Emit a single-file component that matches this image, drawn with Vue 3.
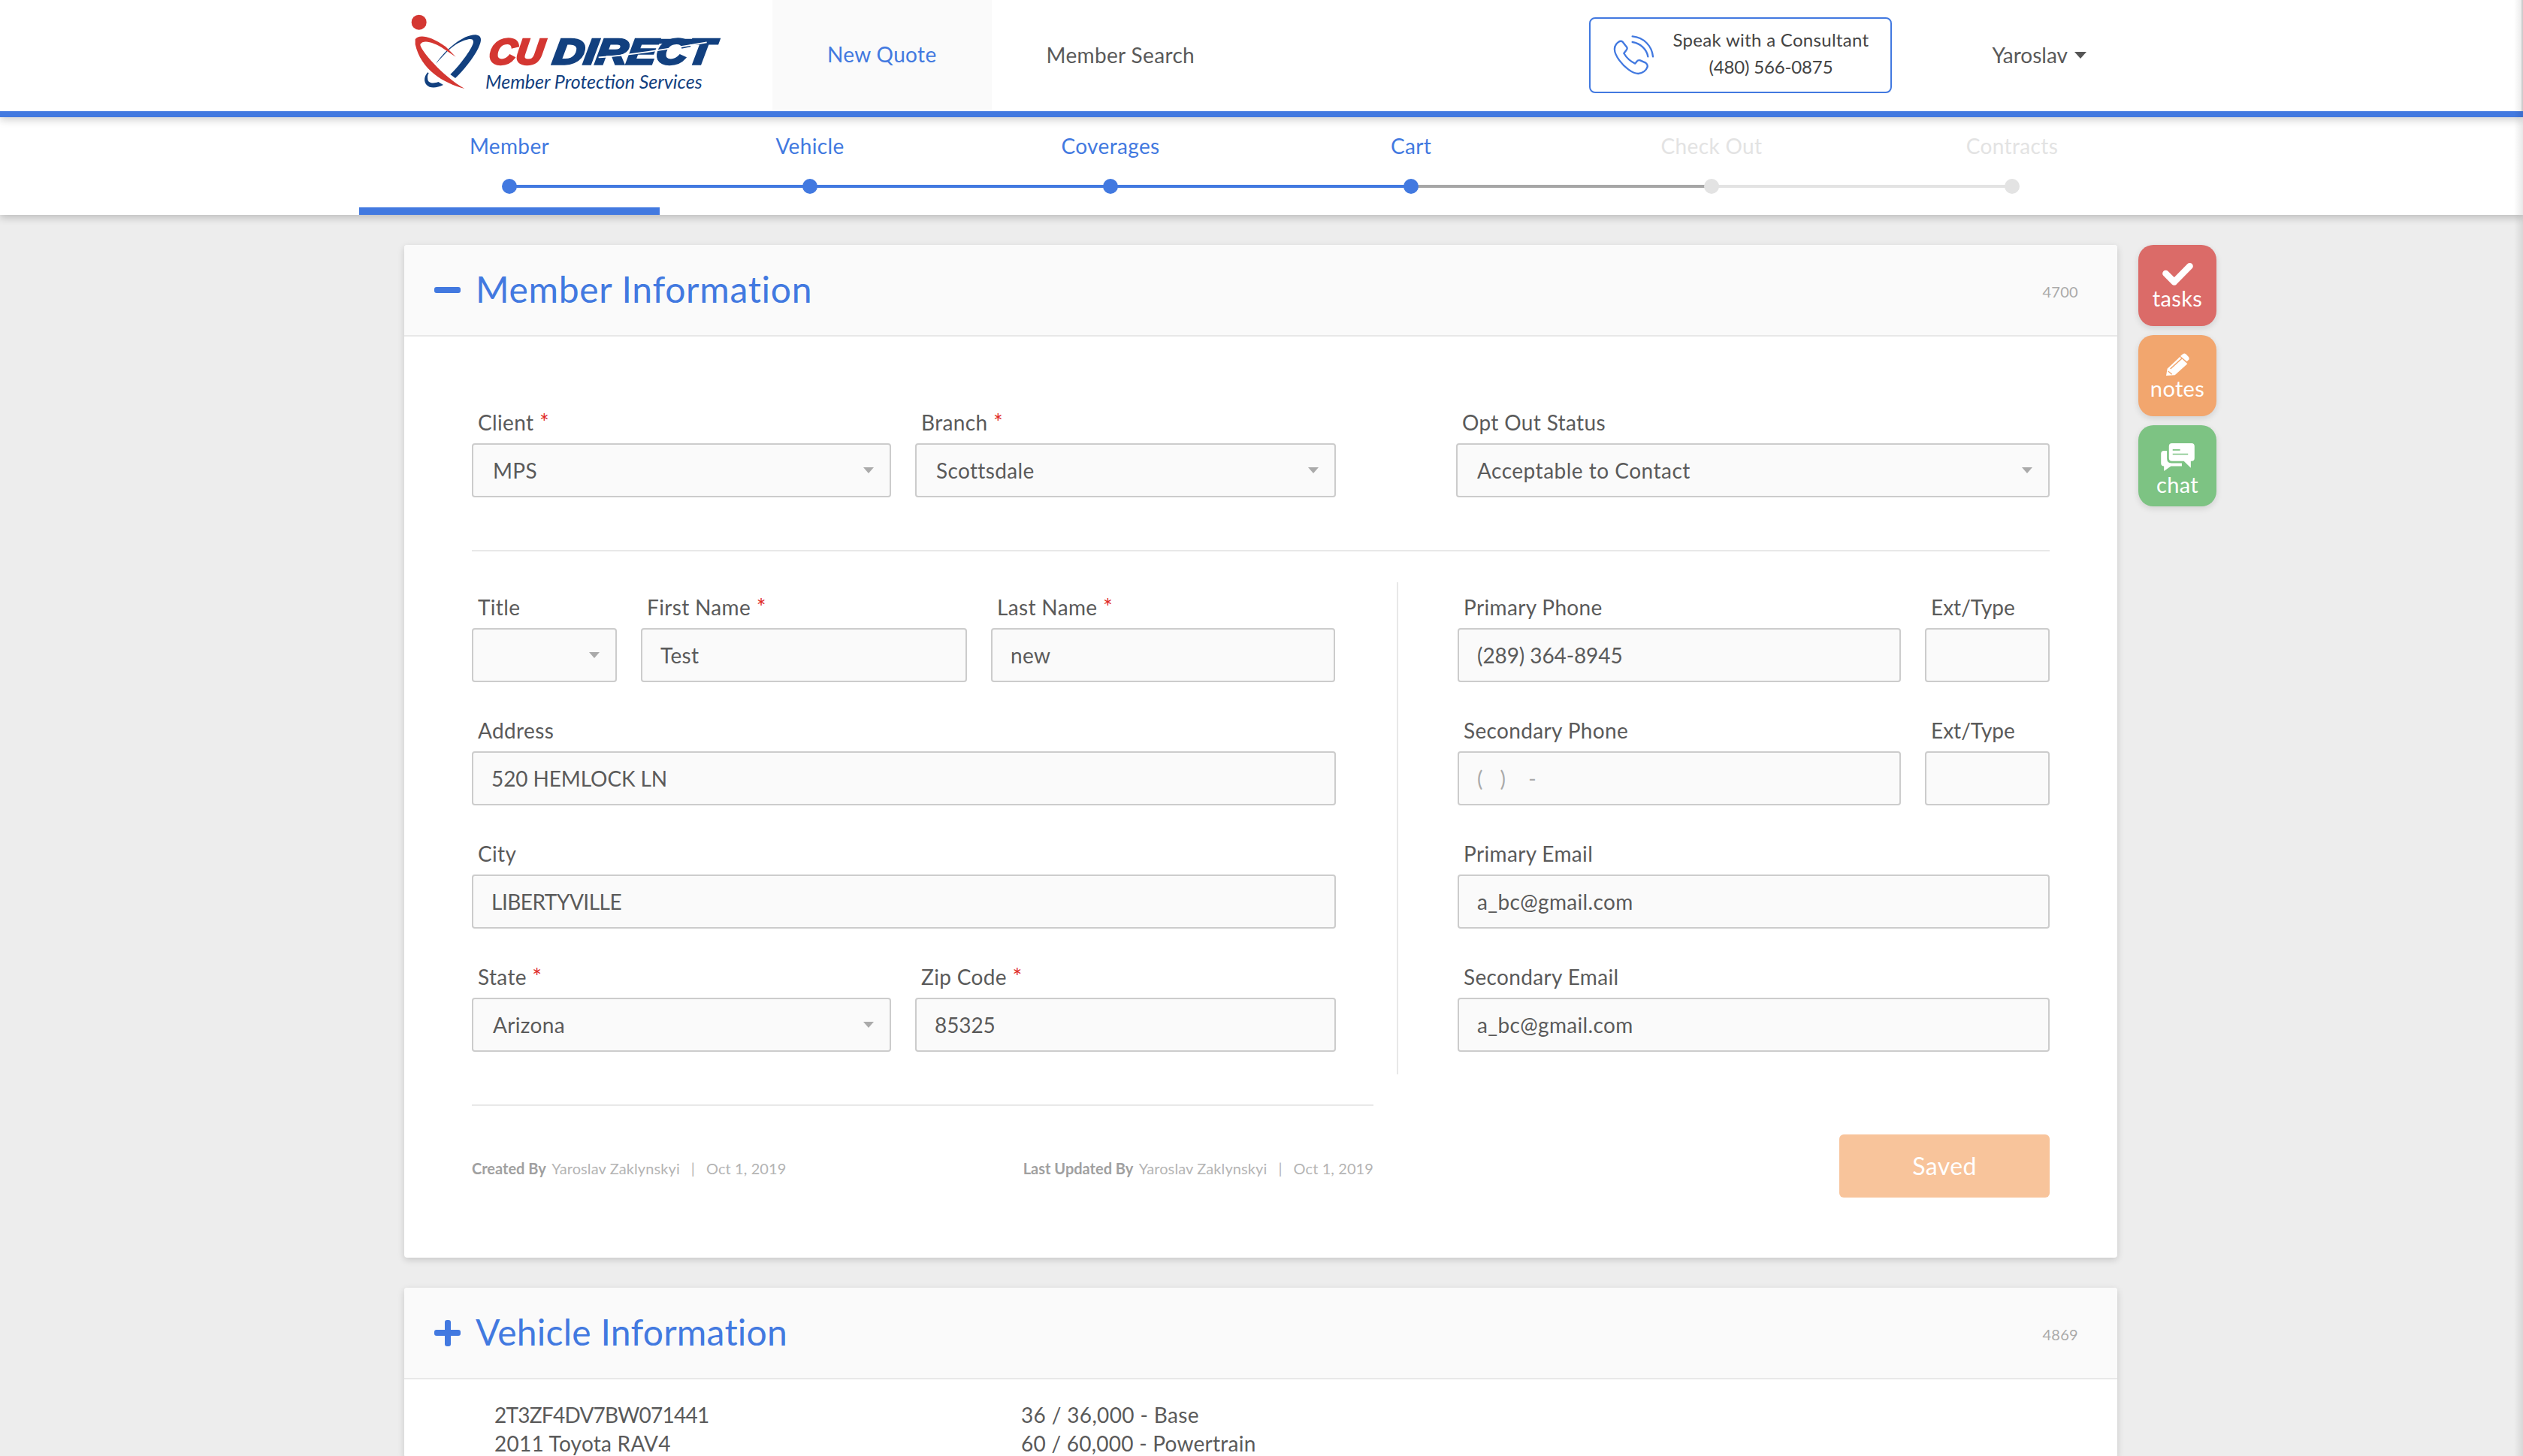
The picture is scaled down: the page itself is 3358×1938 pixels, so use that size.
<script setup>
const steps = [
  { name: 'Member', done: true, line: 'blue', current: true },
  { name: 'Vehicle', done: true, line: 'blue' },
  { name: 'Coverages', done: true, line: 'blue' },
  { name: 'Cart', done: true, line: 'grey' },
  { name: 'Check Out', done: false, line: 'light' },
  { name: 'Contracts', done: false, line: '' },
]
</script>

<template>
  <div class="page">
    <header class="topbar">
      <div class="wrap head-row">
        <svg class="logo" viewBox="0 0 1350 450" width="450" height="150" role="img" aria-label="CU Direct">
          <circle cx="83" cy="92" r="30" fill="#d43732" />
          <path fill="#12407f" d="M150 258C190 200 260 140 310 142C335 145 335 165 320 195C300 235 260 285 228 315L208 300C250 260 300 190 300 170C300 150 270 160 240 175C210 190 180 225 150 258Z" />
          <path fill="#12407f" d="M118 292C100 310 100 340 125 350C140 355 160 352 180 342L160 330C140 338 120 335 118 320C116 310 118 300 122 295Z" />
          <path fill="#d43732" d="M68 160C80 143 120 140 190 190L230 230L185 200C140 170 100 160 88 180C85 200 180 310 265 357C180 335 90 280 68 180Z" />
          <g transform="skewX(-8)">
            <text class="logo-big" x="394" y="258" fill="#d43732" stroke="#d43732" textLength="216" lengthAdjust="spacingAndGlyphs">CU</text>
            <text class="logo-big" x="650" y="258" fill="#12407f" stroke="#12407f" textLength="640" lengthAdjust="spacingAndGlyphs">DIRECT</text>
          </g>
          <path d="M1040 158H1278L1270 178H1040Z" fill="#12407f" />
          <path d="M800 232C900 226 1040 205 1232 172" fill="none" stroke="#fff" stroke-width="5" />
          <text class="logo-sub" x="348" y="357" fill="#12407f" textLength="866" lengthAdjust="spacingAndGlyphs">Member Protection Services</text>
        </svg>
        <nav class="tabs">
          <a class="tab active">New Quote</a>
          <a class="tab">Member Search</a>
        </nav>
        <div class="consult">
          <svg class="phone" viewBox="140 95 165 165" width="55" height="55" fill="none" stroke="#4279e0" stroke-width="7" stroke-linecap="round" stroke-linejoin="round">
            <path d="M178 124C170 118 160 124 152 134C140 150 148 175 165 198C185 225 215 250 240 251C258 250 272 238 277 224C279 216 275 212 270 208L248 198C242 196 238 198 234 203L228 211C215 205 195 190 183 170L192 158C196 154 197 150 195 146Z" />
            <path d="M217 125C250 130 275 155 279 183" />
            <path d="M217 102C262 106 295 140 299 183" />
          </svg>
          <div class="consult-text">
            <div>Speak with a Consultant</div>
            <div class="consult-num">(480) 566-0875</div>
          </div>
        </div>
        <div class="user">Yaroslav<span class="user-caret"></span></div>
      </div>
    </header>

    <section class="stepper">
      <div class="wrap step-row">
        <div v-for="s in steps" :key="s.name" class="step" :class="{ off: !s.done, current: s.current }">
          <span class="step-name">{{ s.name }}</span>
          <span class="dot"></span>
          <span v-if="s.line" class="seg" :class="s.line"></span>
        </div>
      </div>
    </section>

    <main class="main">
      <div class="cards">
        <section class="card">
          <div class="card-head">
            <span class="sign minus"></span>
            <h2>Member Information</h2>
            <span class="rec">4700</span>
          </div>
          <div class="form">
            <div class="row">
              <div class="field w558"><label>Client <i>*</i></label><div class="box sel">MPS</div></div>
              <div class="field w560"><label>Branch <i>*</i></label><div class="box sel">Scottsdale</div></div>
              <div class="field w790 push"><label>Opt Out Status</label><div class="box sel wide">Acceptable to Contact</div></div>
            </div>
            <hr class="rule" />
            <div class="split">
              <div class="col-left">
                <div class="row">
                  <div class="field w193"><label>Title</label><div class="box sel"></div></div>
                  <div class="field w434"><label>First Name <i>*</i></label><div class="box">Test</div></div>
                  <div class="field w458"><label>Last Name <i>*</i></label><div class="box">new</div></div>
                </div>
                <div class="field gap"><label>Address</label><div class="box caps">520 HEMLOCK LN</div></div>
                <div class="field gap"><label>City</label><div class="box city">LIBERTYVILLE</div></div>
                <div class="row gap">
                  <div class="field w558"><label>State <i>*</i></label><div class="box sel">Arizona</div></div>
                  <div class="field w560"><label>Zip Code <i>*</i></label><div class="box num">85325</div></div>
                </div>
              </div>
              <div class="col-right">
                <div class="row">
                  <div class="field w590"><label>Primary Phone</label><div class="box num">(289) 364-8945</div></div>
                  <div class="field w166"><label class="ext">Ext/Type</label><div class="box"></div></div>
                </div>
                <div class="row gap">
                  <div class="field w590"><label>Secondary Phone</label><div class="box ph">(&nbsp;&nbsp;&nbsp;)&nbsp;&nbsp;&nbsp;&nbsp;-</div></div>
                  <div class="field w166"><label class="ext">Ext/Type</label><div class="box"></div></div>
                </div>
                <div class="field gap"><label>Primary Email</label><div class="box">a_bc@gmail.com</div></div>
                <div class="field gap"><label>Secondary Email</label><div class="box">a_bc@gmail.com</div></div>
              </div>
            </div>
            <div class="foot">
              <div class="meta-col">
                <hr class="rule" />
                <div class="meta">
                  <span><b>Created By</b> Yaroslav Zaklynskyi<span class="sep">|</span>Oct 1, 2019</span>
                  <span><b>Last Updated By</b> Yaroslav Zaklynskyi<span class="sep">|</span>Oct 1, 2019</span>
                </div>
              </div>
              <button class="saved" type="button">Saved</button>
            </div>
          </div>
        </section>

        <section class="card">
          <div class="card-head">
            <span class="sign plus"></span>
            <h2 class="tight">Vehicle Information</h2>
            <span class="rec">4869</span>
          </div>
          <div class="vehicle">
            <div class="veh-col">
              <div class="vin">2T3ZF4DV7BW071441</div>
              <div class="model">2011 Toyota RAV4</div>
            </div>
            <div class="veh-col">
              <div>36 / 36,000 - Base</div>
              <div class="model">60 / 60,000 - Powertrain</div>
            </div>
          </div>
        </section>
      </div>

      <aside class="side">
        <a class="side-btn red">
          <svg viewBox="593 150 122 90" width="41" height="30"><path d="M606 192L640 226L702 163" fill="none" stroke="#fff" stroke-width="26" stroke-linejoin="round" stroke-linecap="round" /></svg>
          <span>tasks</span>
        </a>
        <a class="side-btn orange">
          <svg viewBox="617 510 93 90" width="31" height="30">
            <path fill="#fff" d="M622 572L672 525L702 553L652 598L617 600Z" />
            <path fill="#fff" d="M680 517Q688 508 696 514L706 524Q712 532 706 538L700 544L674 522Z" />
            <path d="M634 573L680 531" stroke="#f2a66e" stroke-width="5" />
            <path d="M625 582L640 595" stroke="#f2a66e" stroke-width="4" />
          </svg>
          <span>notes</span>
        </a>
        <a class="side-btn green">
          <svg viewBox="588 873 135 112" width="45" height="37">
            <path fill="#fff" d="M632 873H711Q723 873 723 885V933Q723 945 711 945H708V972L680 945H632Q620 945 620 933V885Q620 873 632 873Z" />
            <path d="M635 900H665M635 917H697" stroke="#7dc383" stroke-width="5" />
            <path fill="#fff" d="M612 903H600Q588 903 588 915V953Q588 965 600 965V985L628 965H672V953H630Q612 953 612 935Z" />
          </svg>
          <span class="chat-label">chat</span>
        </a>
      </aside>
    </main>
    <div class="edge"></div>
  </div>
</template>

<style scoped>
.page { position: relative; width: 100%; height: 1938px; overflow: hidden; background: #ededed; font-family: Lato, "Open Sans", sans-serif; color: #5a5a5a; font-size: 28px; letter-spacing: .35px; }
.wrap { box-sizing: border-box; width: 2402px; margin: 0 auto; padding-right: 2px; }

.topbar { position: relative; z-index: 3; height: 148px; background: #fff; border-bottom: 8px solid #4279e0; box-shadow: 0 4px 10px rgba(0,0,0,.18); }
.head-row { display: flex; align-items: center; height: 148px; }
.logo { margin: -1px 0 -1px 52px; flex: none; }
.logo-big { font-family: "Liberation Sans", sans-serif; font-weight: 700; font-style: italic; font-size: 142px; stroke-width: 10px; letter-spacing: 0; }
.logo-sub { font-family: Lato, sans-serif; font-style: italic; font-size: 78px; letter-spacing: 0; }
.tabs { display: flex; align-self: stretch; margin-left: 48px; }
.tab { display: flex; align-items: center; justify-content: center; padding: 0 73px 2px; }
.tab.active { background: #fafafa; color: #4279e0; margin-bottom: 2px; }
.consult { box-sizing: border-box; display: flex; align-items: center; width: 403px; height: 101px; margin-left: auto; margin-top: -2px; padding-left: 30px; border: 2px solid #4279e0; border-radius: 8px; }
.consult-text { flex: 1; text-align: center; font-size: 24px; line-height: 36px; color: #444; padding: 0 5px 5px 0; letter-spacing: .3px; }
.consult-num { letter-spacing: -.15px; }
.phone { flex: none; }
.user { display: flex; align-items: center; margin-left: 133px; margin-right: 101px; padding-bottom: 2px; letter-spacing: 0; }
.user-caret { margin-left: 9px; border: 8px solid transparent; border-top: 9px solid #555; border-bottom: 0; }

.stepper { position: relative; z-index: 2; height: 130px; background: #fff; box-shadow: 0 4px 10px rgba(0,0,0,.2); }
.step-row { display: grid; grid-template-columns: repeat(6, 400px); }
.step { position: relative; display: flex; flex-direction: column; align-items: center; box-sizing: border-box; height: 130px; padding-top: 20px; color: #4279e0; }
.step.current { border-bottom: 10px solid #4279e0; }
.step.off { color: #e3e3e3; }
.step-name { line-height: 36px; }
.dot { position: relative; z-index: 1; width: 20px; height: 20px; margin-top: 26px; border-radius: 50%; background: currentColor; }
.seg { position: absolute; left: 50%; top: 90px; width: 400px; height: 4px; }
.seg.blue { background: #4279e0; }
.seg.grey { background: #a6a6a6; }
.seg.light { background: #e3e3e3; }

.main { box-sizing: border-box; display: flex; align-items: flex-start; gap: 28px; width: 2402px; margin: 0 auto; padding: 40px 0 0 60px; }
.cards { display: flex; flex-direction: column; gap: 40px; flex: none; width: 2280px; }
.card { background: #fff; border-radius: 4px; box-shadow: 0 3px 10px rgba(0,0,0,.16); }
.card-head { display: flex; align-items: center; height: 120px; padding: 0 40px; background: #fafafa; border-bottom: 2px solid #e8e8e8; border-radius: 4px 4px 0 0; }
.card-head h2 { margin: -4px 0 0 20px; font-size: 48px; font-weight: 400; color: #4279e0; letter-spacing: .7px; }
.card-head h2.tight { letter-spacing: .25px; }
.rec { margin-left: auto; margin-right: 12px; margin-top: 3px; font-size: 20px; color: #aaa; letter-spacing: .3px; }
.sign { position: relative; width: 35px; height: 8px; border-radius: 3px; background: #4279e0; }
.plus::after { content: ""; position: absolute; left: 13.5px; top: -13.5px; width: 8px; height: 35px; border-radius: 3px; background: #4279e0; }

.form { padding: 96px 90px 80px; }
.row { display: flex; gap: 32px; }
.row .push { margin-left: 128px; }
.field label { display: block; padding-left: 8px; margin-bottom: 10px; line-height: 36px; }
.field label.ext { letter-spacing: 0; }
.field i { font-style: normal; line-height: 0; color: #e02b27; font-size: 30px; }
.gap { margin-top: 46px; }
.box { position: relative; box-sizing: border-box; display: flex; align-items: center; height: 72px; padding: 0 24px; background: #fafafa; border: 2px solid #ccc; border-radius: 4px; }
.sel { padding-left: 26px; }
.wide { letter-spacing: .5px; }
.caps { letter-spacing: -.1px; }
.city { letter-spacing: -.5px; }
.sel::after { content: ""; position: absolute; right: 21px; top: 30px; border: 7px solid transparent; border-top: 8px solid #aaa; border-bottom: 0; }
.ph { color: #aaa; }
.num { letter-spacing: -.1px; }
.w558 { width: 558px; } .w560 { width: 560px; } .w790 { width: 790px; }
.w193 { width: 193px; } .w434 { width: 434px; } .w458 { width: 458px; }
.w590 { width: 590px; } .w166 { width: 166px; }
.rule { height: 2px; margin: 0; border: 0; background: #e8e8e8; }
.form > .rule { margin-top: 70px; }
.split { display: flex; margin-top: 41px; }
.col-left { width: 1150px; height: 640px; padding: 15px 81px 0 0; border-right: 2px solid #e8e8e8; }
.col-right { width: 788px; margin-left: 79px; padding-top: 15px; }
.foot { display: flex; justify-content: space-between; align-items: flex-start; margin-top: 40px; }
.meta-col { width: 1200px; }
.meta { display: flex; justify-content: space-between; margin-top: 68px; font-size: 20px; line-height: 30px; color: #b4b4b4; letter-spacing: .1px; }
.meta b { font-weight: 700; color: #a0a0a0; letter-spacing: 0; margin-right: 3px; }
.sep { margin: 0 15px; }
.saved { width: 280px; height: 84px; margin-top: 40px; padding-bottom: 3px; border: 0; border-radius: 6px; background: #f8c49b; color: #fff; font: 400 32px Lato, sans-serif; letter-spacing: .4px; }

.vehicle { display: flex; padding: 28px 120px 0; line-height: 38px; }
.veh-col { width: 701px; }
.vin { letter-spacing: -.75px; }
.model { letter-spacing: .25px; }

.side { display: flex; flex-direction: column; gap: 12px; flex: none; width: 104px; }
.side-btn { box-sizing: border-box; display: flex; flex-direction: column; align-items: center; height: 108px; padding-top: 24px; border-radius: 20px; color: #fff; font-size: 29px; line-height: 30px; box-shadow: 0 3px 8px rgba(0,0,0,.12); }
.side-btn span { margin-top: 2px; }
.side-btn .chat-label { margin-top: 3px; }
.red { background: #db6b68; } .orange { background: #f2a66e; } .green { background: #7dc383; }

.edge { position: absolute; z-index: 4; top: 0; right: 0; bottom: 0; width: 12px; background: linear-gradient(to right, rgba(0,0,0,0), rgba(0,0,0,.09)); pointer-events: none; }
.edge::after { content: ""; position: absolute; top: 0; right: 0; height: 148px; width: 2px; background: #ccc; }
</style>

<style>
html, body { margin: 0; background: #ededed; }
</style>
